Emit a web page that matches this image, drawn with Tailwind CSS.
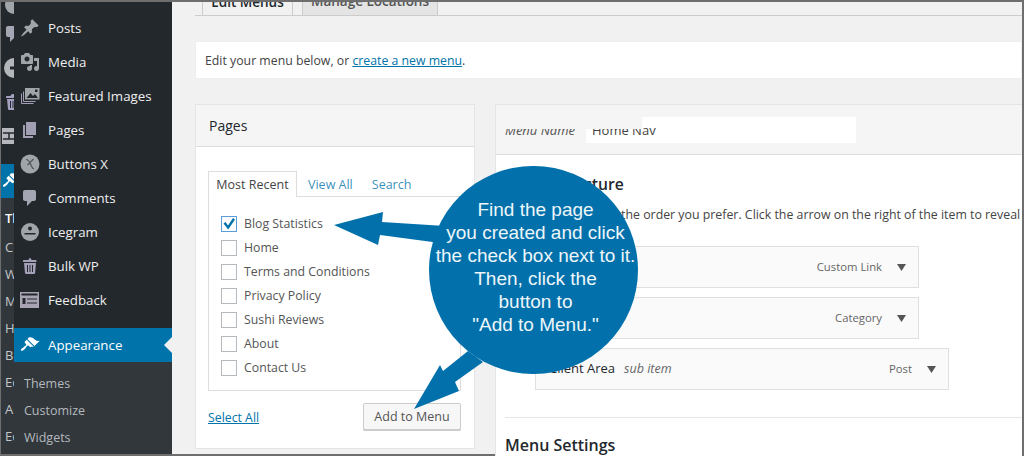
<!DOCTYPE html>
<html lang="en">
<head>
<meta charset="UTF-8">
<title>Edit Menus</title>
<script src="https://cdn.jsdelivr.net/npm/@tailwindcss/browser@4"></script>
</head>
<body class="bg-white">
<div class="relative w-[1024px] h-[456px] overflow-hidden font-['Open_Sans',sans-serif]">
  <div class="w-full h-full flex border-t-2 border-l border-r-2 border-b-2 border-[#6e6e6e] bg-[#f1f1f1]">

    <!-- back sidebar, cut off by the front one -->
    <div class="w-[13px] shrink-0 h-full overflow-hidden bg-[#23282d] flex flex-col text-[13px] text-[#c4c7ca]">
      <div class="h-[15px] flex items-end pl-[3px]">
        <svg class="w-[20px] h-[20px] shrink-0 fill-[#a0a5aa]" viewBox="0 0 20 20"><circle cx="10" cy="8" r="9"/></svg>
      </div>
      <div class="h-[34px] flex items-center pl-[2px]">
        <svg class="w-[20px] h-[20px] shrink-0 fill-[#a4a6b4]" viewBox="0 0 20 20"><path d="M5 2h9c1.1 0 2 .9 2 2v7c0 1.1-.9 2-2 2h-2l-5 5v-5H5c-1.1 0-2-.9-2-2V4c0-1.1.9-2 2-2z"/></svg>
      </div>
      <div class="h-[34px] flex items-center pl-[2px]">
        <svg class="w-[22px] h-[22px] shrink-0" viewBox="0 0 22 22"><circle cx="11" cy="11" r="10" fill="#b4b7ba"/><rect x="7" y="9.5" width="15" height="3" fill="#23282d"/></svg>
      </div>
      <div class="h-[34px] flex items-center pl-[3px]">
        <svg class="w-[20px] h-[20px] shrink-0" viewBox="0 0 20 20"><path fill="#a4a0c0" d="M6.5 4c.2-1.100 1.300-2 2.500-2s2.300.9 2.500 2h3c.6 0 1 .4 1 1v1H2V5c0-.6.5-1 1-1zM3 7h11.500l-.9 10.100c0 .5-.5.9-1 .9H5c-.5 0-.9-.4-1-.9z"/><path stroke="#23282d" d="M6.500 9v7M9 9v7M11.500 9v7"/></svg>
      </div>
      <div class="h-[34px] flex items-center pl-px">
        <svg class="w-[22px] h-[20px] shrink-0" viewBox="0 0 22 20"><rect y="2" width="22" height="16" fill="#b7b8bd"/><path stroke="#23282d" stroke-width="1.500" d="M1 7h20M1 13h20M7 7v6"/></svg>
      </div>
      <div class="mt-[11px] h-[34px] shrink-0 bg-[#0073aa] flex items-center pl-[1px]">
        <svg class="w-[20px] h-[20px] shrink-0 fill-white" viewBox="0 0 20 20"><path d="M14.480 11.060L7.410 3.990l1.500-1.500c.5-.56 2.300-.47 3.510.32 1.210.8 1.430 1.280 2.910 2.100 1.180.64 2.450 1.260 4.450.85zm-.71.71L6.700 4.700 4.930 6.470c-.39.39-.39 1.020 0 1.410l1.060 1.060c.39.39.39 1.030 0 1.420-.6.6-1.430 1.110-2.210 1.690-.35.26-.7.53-1.010.84C1.430 13.230.4 14.850 1.100 15.600c.71.75 2.320-.27 3.650-1.600.31-.31.58-.66.84-1.010.58-.78 1.090-1.610 1.690-2.210.39-.39 1.020-.39 1.410 0l1.060 1.060c.39.39 1.020.39 1.410 0z"/></svg>
      </div>
      <div class="flex-1 bg-[#32373c] pl-1 pt-[7px] whitespace-nowrap leading-[27px]">
        <div class="font-semibold text-white mb-[2px]">Th</div>
        <div>C</div>
        <div>W</div>
        <div>M</div>
        <div>H</div>
        <div>Ba</div>
        <div>Ed</div>
        <div>A</div>
        <div>Ed</div>
      </div>
    </div>

    <!-- front sidebar -->
    <aside class="relative w-[158px] shrink-0 h-full bg-[#23282d] flex flex-col text-[13.3px] text-[#eeeeee]">
      <ul class="pt-[10px]">
        <li class="h-[34px] flex items-center gap-[8px] pl-[6px]">
          <svg class="w-[20px] h-[20px] mb-[2px] fill-[#a0a5aa]" viewBox="0 0 20 20"><path d="M10.440 3.020l1.820-1.820 6.360 6.350-1.830 1.820c-1.050-.68-2.480-.57-3.410.36l-.75.75c-.92.93-1.040 2.350-.35 3.410l-1.830 1.820-2.410-2.410-2.800 2.790c-.42.42-3.380 2.710-3.800 2.290s1.860-3.390 2.280-3.810l2.790-2.790L4.100 9.360l1.830-1.820c1.050.69 2.480.57 3.400-.36l.75-.75c.93-.92 1.050-2.350.36-3.410z"/></svg>
          Posts
        </li>
        <li class="h-[34px] flex items-center gap-[8px] pl-[6px]">
          <svg class="w-[20px] h-[20px] mb-[2px] fill-[#a0a5aa]" viewBox="0 0 20 20"><path d="M13 11V4c0-.55-.45-1-1-1h-1.670L9 1H5L3.670 3H2c-.55 0-1 .45-1 1v7c0 .55.45 1 1 1h10c.55 0 1-.45 1-1zM7 4.500c1.380 0 2.500 1.120 2.500 2.500S8.380 9.500 7 9.500 4.500 8.380 4.500 7 5.620 4.500 7 4.500zM14 6h5v10.500c0 1.380-1.120 2.500-2.500 2.500S14 17.880 14 16.500s1.120-2.500 2.500-2.500c.17 0 .34.02.5.05V9h-3V6zm-4 8.050V13h2v3.500c0 1.380-1.120 2.500-2.500 2.500S7 17.880 7 16.500 8.120 14 9.500 14c.17 0 .34.02.5.05z"/></svg>
          Media
        </li>
        <li class="h-[34px] flex items-center gap-[8px] pl-[6px]">
          <svg class="w-[20px] h-[20px] mb-[2px]" viewBox="0 0 20 20" fill="none"><path stroke="#a29fb4" d="M1.500 7.500v10h12M3.500 5.500v10h12"/><rect x="5" y="2" width="14.500" height="11.500" fill="#a0a5aa"/><path fill="#23282d" d="M6.500 12l4-5 2.500 3 2-2 3 4zM15 3.500h2.500V6H15z"/></svg>
          Featured Images
        </li>
        <li class="h-[34px] flex items-center gap-[8px] pl-[6px]">
          <svg class="w-[20px] h-[20px] mb-[2px] fill-[#a29fb4]" viewBox="0 0 20 20"><path d="M6 15V2h10v13H6zm-1 1h8v2H3V5h2v11z"/></svg>
          Pages
        </li>
        <li class="h-[34px] flex items-center gap-[8px] pl-[6px]">
          <svg class="w-[20px] h-[20px] mb-[2px]" viewBox="0 0 20 20"><circle cx="10" cy="10" r="9.500" fill="#a0a5aa"/><path fill="none" stroke="#50555a" stroke-width="1.200" d="M6 5.500c2 0 3.500 2 4.500 4.500s2 4.500 3.500 5M13.500 5L7.500 11"/></svg>
          Buttons X
        </li>
        <li class="h-[34px] flex items-center gap-[8px] pl-[6px]">
          <svg class="w-[20px] h-[20px] mb-[2px] fill-[#a4a6b4]" viewBox="0 0 20 20"><path d="M5 2h9c1.100 0 2 .9 2 2v7c0 1.100-.9 2-2 2h-2l-5 5v-5H5c-1.100 0-2-.9-2-2V4c0-1.100.9-2 2-2z"/></svg>
          Comments
        </li>
        <li class="h-[34px] flex items-center gap-[8px] pl-[6px]">
          <svg class="w-[20px] h-[20px] mb-[2px]" viewBox="0 0 20 20"><circle cx="10" cy="10" r="9" fill="#a0a5aa"/><circle cx="10" cy="6.500" r="2" fill="#23282d"/><rect x="4.500" y="11" width="11" height="1.500" fill="#23282d"/></svg>
          Icegram
        </li>
        <li class="h-[34px] flex items-center gap-[8px] pl-[6px]">
          <svg class="w-[20px] h-[20px] mb-[2px]" viewBox="0 0 20 20"><path fill="#a4a0b8" d="M8.500 4c.2-1.100.9-2 1.500-2s1.300.9 1.500 2h4c.6 0 1 .4 1 1v1H3V5c0-.6.5-1 1-1zM4 7h12l-.9 10.100c0 .5-.5.9-1 .9H6c-.5 0-.9-.4-1-.9z"/><path stroke="#23282d" d="M7.500 9v7M10 9v7M12.500 9v7"/></svg>
          Bulk WP
        </li>
        <li class="h-[34px] flex items-center gap-[8px] pl-[6px]">
          <svg class="w-[20px] h-[20px] mb-[2px]" viewBox="0 0 20 20"><rect y="2" width="19" height="16" fill="#a8a4b4"/><rect x="1.500" y="3.500" width="16" height="2" fill="#23282d"/><rect x="2.500" y="8" width="3" height="6" fill="#23282d"/><path stroke="#23282d" stroke-width="1.200" d="M7 9h10M7 13h10"/></svg>
          Feedback
        </li>
      </ul>
      <div class="relative mt-[10px] h-[34px] shrink-0 bg-[#0073aa] text-white flex items-center gap-[8px] pl-[6px] pt-[2px]">
        <svg class="w-[20px] h-[20px] mb-[2px] fill-white" viewBox="0 0 20 20"><path d="M14.480 11.060L7.410 3.990l1.500-1.500c.5-.56 2.300-.47 3.510.32 1.210.8 1.430 1.280 2.910 2.100 1.180.64 2.450 1.260 4.450.85zm-.71.71L6.700 4.700 4.930 6.470c-.39.39-.39 1.020 0 1.410l1.060 1.060c.39.39.39 1.030 0 1.420-.6.6-1.430 1.110-2.210 1.690-.35.26-.7.53-1.010.84C1.430 13.230.4 14.850 1.100 15.600c.71.75 2.320-.27 3.650-1.600.31-.31.58-.66.84-1.010.58-.78 1.090-1.610 1.690-2.210.39-.39 1.020-.39 1.410 0l1.060 1.060c.39.39 1.020.39 1.410 0z"/></svg>
        Appearance
        <svg class="absolute right-0 top-[9px] w-[8px] h-[16px] fill-[#f1f1f1]" viewBox="0 0 8 16"><path d="M8 0v16L0 8z"/></svg>
      </div>
      <ul class="flex-1 bg-[#32373c] pt-[8px] pl-[10px] text-[12.5px] leading-[27px] text-[#b4b9be]">
        <li>Themes</li>
        <li>Customize</li>
        <li>Widgets</li>
      </ul>
    </aside>

    <!-- main content -->
    <main class="flex-1 min-w-0 pl-[23px] flex flex-col text-[12.3px] text-[#444444]">
      <div class="h-[14px] shrink-0 flex items-end border-b border-[#cccccc] pl-[7px] text-[13.5px] font-semibold overflow-hidden whitespace-nowrap">
        <div class="h-[30px] w-[91px] shrink-0 -mb-px flex justify-center border border-b-0 border-[#cccccc] bg-[#f1f1f1] text-[#23282d] leading-[14px] pt-[8px]">Edit Menus</div>
        <div class="h-[30px] w-[136px] shrink-0 ml-[9px] flex justify-center border border-b-0 border-[#cccccc] bg-[#e4e4e4] text-[#555555] leading-[14px] pt-[8px]">Manage Locations</div>
      </div>

      <div class="mt-[25px] h-[38px] shrink-0 bg-white border border-[#eeeeee] flex items-center pl-[9px] pt-[2px]">
        <p>Edit your menu below, or <a class="text-[#0073aa] underline">create a new menu</a>.</p>
      </div>

      <div class="mt-[25px] flex gap-[20px] items-start">
        <!-- pages panel -->
        <section class="w-[280px] h-[345px] shrink-0 bg-white border border-[#e5e5e5]">
          <h3 class="h-[42px] bg-[#f5f5f5] border-b border-[#dddddd] flex items-center pl-[13px] text-[14px] font-medium text-[#23282d]">Pages</h3>
          <div class="pl-[12px] pr-[13px] pt-[24px]">
            <div class="flex items-end h-[26px] text-[12.5px] relative z-10">
              <div class="h-[26px] w-[89px] flex items-center justify-center border border-b-0 border-[#dddddd] bg-white pt-[2px]">Most Recent</div>
              <a class="ml-[11px] pb-[2px] text-[#0073aa]/80">View All</a>
              <a class="ml-[19px] pb-[2px] text-[#0073aa]/80">Search</a>
            </div>
            <ul class="-mt-px h-[195px] border border-[#dddddd] pt-[15px] pl-[12px] text-[12.3px] text-[#555555]">
              <li class="h-[24px] flex items-center gap-[7px]">
                <span class="w-[16px] h-[16px] border border-[#5b9dd9] flex items-center justify-center">
                  <svg class="w-[14px] h-[14px] fill-[#0073aa]" viewBox="0 0 14 14"><path d="M1.500 6.500l2-1.500 2.500 3.500L11 1l2 1.500L6.200 12.500z"/></svg>
                </span>
                Blog Statistics
              </li>
              <li class="h-[24px] flex items-center gap-[7px]"><span class="w-[16px] h-[16px] border border-[#b4b9be]"></span>Home</li>
              <li class="h-[24px] flex items-center gap-[7px]"><span class="w-[16px] h-[16px] border border-[#b4b9be]"></span>Terms and Conditions</li>
              <li class="h-[24px] flex items-center gap-[7px]"><span class="w-[16px] h-[16px] border border-[#b4b9be]"></span>Privacy Policy</li>
              <li class="h-[24px] flex items-center gap-[7px]"><span class="w-[16px] h-[16px] border border-[#b4b9be]"></span>Sushi Reviews</li>
              <li class="h-[24px] flex items-center gap-[7px]"><span class="w-[16px] h-[16px] border border-[#b4b9be]"></span>About</li>
              <li class="h-[24px] flex items-center gap-[7px]"><span class="w-[16px] h-[16px] border border-[#b4b9be]"></span>Contact Us</li>
            </ul>
            <div class="mt-[12px] flex items-center justify-between">
              <a class="text-[#0073aa] underline pt-[3px]">Select All</a>
              <button class="w-[98px] h-[27px] pt-[1px] bg-[#f7f7f7] border border-[#cccccc] rounded-[2px] shadow-[0_1px_0_#cccccc] text-[12.5px] text-[#555555]">Add to Menu</button>
            </div>
          </div>
        </section>

        <!-- menu structure panel -->
        <section class="relative flex-1 min-w-0 h-[360px] bg-white border border-[#e5e5e5] border-r-0 overflow-hidden">
          <div class="h-[50px] bg-[#f5f5f5] border-b border-[#dddddd] pl-[9px] pt-[12px] flex relative">
            <span class="leading-[26px] text-[13px] text-[#555555] italic w-[81px] shrink-0">Menu Name</span>
            <div class="w-[270px] h-[26px] bg-white pl-[6px] leading-[26px] text-[13px]">Home Nav</div>
            <div class="absolute left-0 top-0 w-[146px] h-[24px] bg-[#f5f5f5]"></div>
          </div>
          <div class="pl-[9px] whitespace-nowrap">
            <h3 class="mt-[18px] text-[15.7px] leading-[22px] font-semibold text-[#23282d]">Menu Structure</h3>
            <p class="mt-[11px] text-[12.35px] leading-[18px]">Drag each item into the order you prefer. Click the arrow on the right of the item to reveal additional</p>
            <ul class="mt-[22px] flex flex-col gap-[9px] text-[11.3px]">
              <li class="w-[414px] h-[42px] bg-[#fafafa] border border-[#dfdfdf] flex items-center justify-end pr-[12px] text-[#666666]">
                Custom Link
                <svg class="ml-[15px] w-[9px] h-[7px] fill-[#555555]" viewBox="0 0 9 7"><path d="M0 0h9L4.500 7z"/></svg>
              </li>
              <li class="w-[414px] h-[42px] bg-[#fafafa] border border-[#dfdfdf] flex items-center justify-end pr-[12px] text-[#666666]">
                Category
                <svg class="ml-[15px] w-[9px] h-[7px] fill-[#555555]" viewBox="0 0 9 7"><path d="M0 0h9L4.500 7z"/></svg>
              </li>
              <li class="ml-[30px] w-[414px] h-[42px] bg-[#fafafa] border border-[#dfdfdf] flex items-center pl-[13px] pr-[12px] text-[#666666]">
                <span class="text-[13px] font-medium text-[#23282d]">Client Area</span>
                <span class="ml-[9px] text-[12.5px] italic">sub item</span>
                <span class="ml-auto">Post</span>
                <svg class="ml-[15px] w-[9px] h-[7px] fill-[#555555]" viewBox="0 0 9 7"><path d="M0 0h9L4.500 7z"/></svg>
              </li>
            </ul>
            <div class="mt-[27px] border-t border-[#e5e5e5]"></div>
            <h3 class="mt-[16px] text-[16px] leading-[22px] font-semibold text-[#23282d]">Menu Settings</h3>
          </div>
        </section>
      </div>
    </main>
  </div>

  <!-- callout drawn over the screenshot -->
  <svg class="absolute inset-0 w-[1024px] h-[456px] fill-[#0271ab]" viewBox="0 0 1024 456">
    <path d="M334 225L383 212L382 222L445 226L440 243L380 235L378 245z"/>
    <path d="M414 409L440 365L443 371L468 351L483 362L455 382L459 391z"/>
  </svg>
  <div class="absolute left-[429px] top-[166px] w-[209px] h-[208px] rounded-full bg-[#0271ab] pt-[32px] pl-[4px] text-center text-[19px] leading-[23px] text-[#eef6fa] whitespace-nowrap font-['Liberation_Sans',Arial,sans-serif]">
    Find the page<br>
    you created and click<br>
    the check box next to it.<br>
    Then, click the<br>
    button to<br>
    "Add to Menu."
  </div>
</div>
</body>
</html>
